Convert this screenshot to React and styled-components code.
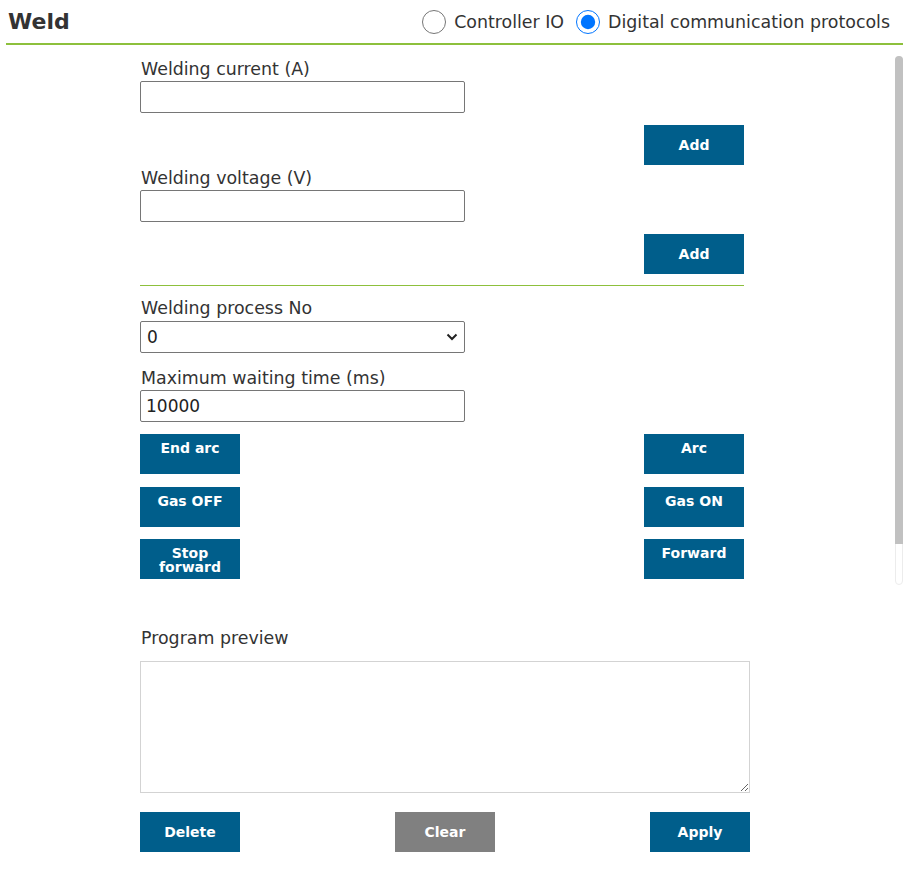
import React from "react";
import styled, { createGlobalStyle } from "styled-components";

const GlobalStyle = createGlobalStyle`
  body {
    margin: 0;
    background: #ffffff;
    font-family: "DejaVu Sans", Verdana, sans-serif;
    color: #333333;
  }
`;

const ChevronDown = () => (
  <svg width="12" height="8" viewBox="0 0 12 8">
    <path d="M1.5 1.5 L6 6 L10.5 1.5" fill="none" stroke="#222" strokeWidth="2" />
  </svg>
);

const App = () => {
  return (
    <Page>
      <GlobalStyle />
      <Header>
        <Title>Weld</Title>
        <Modes>
          <RadioLabel>
            <Radio type="radio" name="mode" />
            Controller IO
          </RadioLabel>
          <RadioLabel>
            <Radio type="radio" name="mode" defaultChecked />
            Digital communication protocols
          </RadioLabel>
        </Modes>
      </Header>

      <ScrollArea>
        <Scroller>
          <Form>
            <Field>
              <Label>Welding current (A)</Label>
              <Input type="text" />
            </Field>
            <RightRow>
              <Button>Add</Button>
            </RightRow>

            <Field>
              <Label>Welding voltage (V)</Label>
              <Input type="text" />
            </Field>
            <RightRow>
              <Button>Add</Button>
            </RightRow>

            <Divider />

            <Field space={14}>
              <Label>Welding process No</Label>
              <SelectWrap>
                <SelectBox defaultValue="0">
                  <option value="0">0</option>
                  <option value="1">1</option>
                </SelectBox>
                <SelectArrow>
                  <ChevronDown />
                </SelectArrow>
              </SelectWrap>
            </Field>

            <Field>
              <Label>Maximum waiting time (ms)</Label>
              <Input type="text" defaultValue="10000" />
            </Field>

            <PairRow>
              <Button top>End arc</Button>
              <Button top>Arc</Button>
            </PairRow>
            <PairRow space={12}>
              <Button top>Gas OFF</Button>
              <Button top>Gas ON</Button>
            </PairRow>
            <PairRow>
              <Button top>Stop forward</Button>
              <Button top>Forward</Button>
            </PairRow>
          </Form>
        </Scroller>
        <ScrollTrack>
          <ScrollThumb />
        </ScrollTrack>
      </ScrollArea>

      <Preview>
        <Label>Program preview</Label>
        <TextArea />
        <BottomRow>
          <Button>Delete</Button>
          <Button grey>Clear</Button>
          <Button>Apply</Button>
        </BottomRow>
      </Preview>
    </Page>
  );
};

export default App;

const Page = styled.div`
  width: 922px;
  height: 872px;
  overflow: hidden;
`;

const Header = styled.div`
  display: flex;
  align-items: center;
  justify-content: space-between;
  height: 43px;
  margin: 0 19px 0 6px;
  padding: 0 13px 0 2px;
  border-bottom: 2px solid #8dc03c;
`;

const Title = styled.div`
  font-weight: bold;
  font-size: 22px;
  color: #333333;
`;

const Modes = styled.div`
  display: flex;
  align-items: center;
  gap: 12px;
`;

const RadioLabel = styled.label`
  display: flex;
  align-items: center;
  gap: 8px;
  font-size: 17.4px;
  color: #333333;
`;

const Radio = styled.input`
  width: 24px;
  height: 24px;
  margin: 0;
  accent-color: #0075ff;
`;

const ScrollArea = styled.div`
  position: relative;
  height: 533px;
  margin: 9px 19px 0 0;
`;

const Scroller = styled.div`
  height: 100%;
  overflow-y: auto;
  scrollbar-width: none;
  &::-webkit-scrollbar {
    display: none;
  }
`;

const ScrollTrack = styled.div`
  position: absolute;
  top: 2px;
  right: 0;
  width: 8px;
  height: 529px;
  box-sizing: border-box;
  border: 1px solid #ececec;
  border-radius: 4px;
  background: #ffffff;
`;

const ScrollThumb = styled.div`
  margin: -1px;
  height: 488px;
  background: #c1c1c1;
  border-radius: 4px 4px 0 0;
`;

const Form = styled.div`
  width: 604px;
  margin-left: 140px;
  padding-top: 4px;
  padding-bottom: 50px;
  display: flex;
  flex-direction: column;
`;

const Field = styled.div`
  display: flex;
  flex-direction: column;
  margin-bottom: ${(p) => p.space ?? 12}px;
`;

const Label = styled.div`
  font-size: 17.4px;
  line-height: 22px;
  color: #333333;
  margin-left: 1px;
`;

const Input = styled.input`
  box-sizing: border-box;
  width: 325px;
  height: 32px;
  margin-top: 1px;
  padding: 0 5px;
  border: 1px solid #767676;
  border-radius: 2px;
  font-family: "DejaVu Sans", Verdana, sans-serif;
  font-size: 17px;
  color: #222222;
`;

const SelectWrap = styled.div`
  position: relative;
  width: 325px;
  margin-top: 2px;
`;

const SelectBox = styled.select`
  box-sizing: border-box;
  width: 325px;
  height: 32px;
  padding: 0 6px;
  border: 1px solid #767676;
  border-radius: 2px;
  background: #ffffff;
  appearance: none;
  font-family: "DejaVu Sans", Verdana, sans-serif;
  font-size: 17px;
  color: #222222;
`;

const SelectArrow = styled.span`
  position: absolute;
  right: 7px;
  top: 12px;
  display: flex;
  pointer-events: none;
`;

const RightRow = styled.div`
  display: flex;
  justify-content: flex-end;
  margin-bottom: 2px;
`;

const Divider = styled.hr`
  width: 100%;
  height: 0;
  border: none;
  border-top: 1px solid #8dc03c;
  margin: 9px 0 11px;
`;

const PairRow = styled.div`
  display: flex;
  justify-content: space-between;
  margin-bottom: ${(p) => p.space ?? 13}px;
`;

const Button = styled.button`
  box-sizing: border-box;
  width: 100px;
  height: 40px;
  padding: ${(p) => (p.top ? "7px 8px 0" : "0 8px")};
  display: flex;
  align-items: ${(p) => (p.top ? "flex-start" : "center")};
  justify-content: center;
  text-align: center;
  border: none;
  border-radius: 0;
  background: ${(p) => (p.grey ? "#808080" : "#005e8b")};
  color: #ffffff;
  font-family: "DejaVu Sans", Verdana, sans-serif;
  font-weight: bold;
  font-size: 14px;
  line-height: 14px;
`;

const Preview = styled.div`
  width: 610px;
  margin: 40px 0 0 140px;
  display: flex;
  flex-direction: column;
`;

const TextArea = styled.textarea`
  box-sizing: border-box;
  width: 610px;
  height: 132px;
  margin-top: 12px;
  border: 1px solid #d3d3d3;
  border-radius: 0;
  resize: vertical;
`;

const BottomRow = styled.div`
  display: flex;
  justify-content: space-between;
  margin-top: 19px;
`;
